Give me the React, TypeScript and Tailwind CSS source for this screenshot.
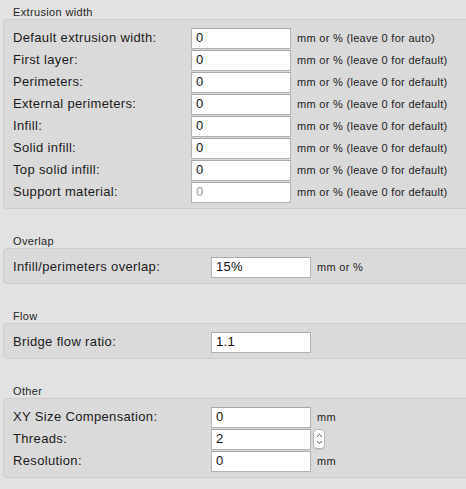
import { ChevronDown, ChevronUp } from "lucide-react";

type Field = {
  label: string;
  value: string;
  unit?: string;
  muted?: boolean;
  spinner?: boolean;
};

type Section = {
  title: string;
  labelWidth: string;
  fields: Field[];
};

const sections: Section[] = [
  {
    title: "Extrusion width",
    labelWidth: "w-[178px]",
    fields: [
      { label: "Default extrusion width:", value: "0", unit: "mm or % (leave 0 for auto)" },
      { label: "First layer:", value: "0", unit: "mm or % (leave 0 for default)" },
      { label: "Perimeters:", value: "0", unit: "mm or % (leave 0 for default)" },
      { label: "External perimeters:", value: "0", unit: "mm or % (leave 0 for default)" },
      { label: "Infill:", value: "0", unit: "mm or % (leave 0 for default)" },
      { label: "Solid infill:", value: "0", unit: "mm or % (leave 0 for default)" },
      { label: "Top solid infill:", value: "0", unit: "mm or % (leave 0 for default)" },
      { label: "Support material:", value: "0", unit: "mm or % (leave 0 for default)", muted: true },
    ],
  },
  {
    title: "Overlap",
    labelWidth: "w-[198px]",
    fields: [{ label: "Infill/perimeters overlap:", value: "15%", unit: "mm or %" }],
  },
  {
    title: "Flow",
    labelWidth: "w-[198px]",
    fields: [{ label: "Bridge flow ratio:", value: "1.1" }],
  },
  {
    title: "Other",
    labelWidth: "w-[198px]",
    fields: [
      { label: "XY Size Compensation:", value: "0", unit: "mm" },
      { label: "Threads:", value: "2", spinner: true },
      { label: "Resolution:", value: "0", unit: "mm" },
    ],
  },
];

function Spinner() {
  return (
    <div className="ml-[2px] flex h-[20px] w-[12px] flex-col items-center justify-center rounded-[4px] border border-[#b4b4b4] bg-white text-[#333] shadow-[0_1px_0_rgba(0,0,0,0.08)]">
      <ChevronUp size={9} strokeWidth={2.2} className="-mb-[1px]" />
      <ChevronDown size={9} strokeWidth={2.2} className="-mt-[1px]" />
    </div>
  );
}

function FieldRow({ field, labelWidth }: { field: Field; labelWidth: string }) {
  return (
    <div className="flex h-[22px] items-center">
      <div className={`${labelWidth} shrink-0 text-[13px] tracking-[0.35px] text-[#1a1a1a]`}>
        {field.label}
      </div>
      <div
        className={`flex h-[21px] w-[100px] shrink-0 items-center border border-[#b3b3b3] border-t-[#a8a8a8] bg-white px-[4px] text-[13px] tracking-[0.3px] ${
          field.muted ? "text-[#9a9a9a]" : "text-[#111]"
        }`}
      >
        {field.value}
      </div>
      {field.spinner ? (
        <Spinner />
      ) : field.unit ? (
        <div className="ml-[6px] whitespace-nowrap text-[11px] tracking-[0.3px] text-[#222]">
          {field.unit}
        </div>
      ) : null}
    </div>
  );
}

export default function App() {
  return (
    <div className="flex h-[489px] w-[466px] flex-col gap-[20px] overflow-hidden bg-[#e2e2e2] font-['Liberation_Sans',Arial,sans-serif]">
      {sections.map((section) => (
        <section key={section.title}>
          <div className="h-[19px] pl-[13px] pt-[5px] text-[11px] leading-[14px] tracking-[0.35px] text-[#262626]">
            {section.title}
          </div>
          <div className="-mr-[4px] ml-[3px] rounded-[4px] border border-[#cdcdcd] bg-[#dadada] pb-[5px] pl-[9px] pt-[7px]">
            {section.fields.map((field) => (
              <FieldRow key={field.label} field={field} labelWidth={section.labelWidth} />
            ))}
          </div>
        </section>
      ))}
    </div>
  );
}
